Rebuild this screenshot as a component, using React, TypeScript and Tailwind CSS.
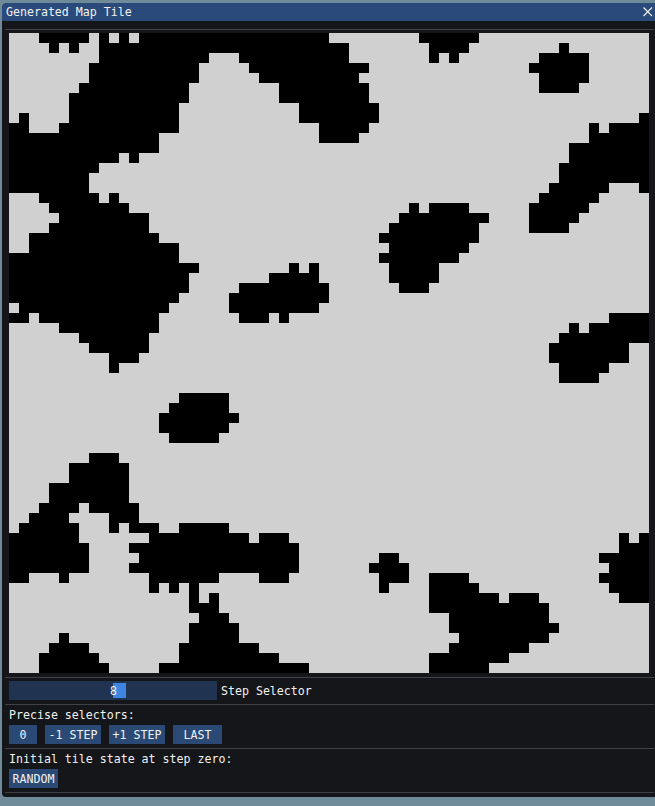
const font = { fontFamily: '"DejaVu Sans Mono", "Liberation Mono", monospace' };

// black cell runs per row: [start, end) in columns
const rows: number[][][] = [
  [[3, 8], [9, 10], [11, 12], [13, 32], [41, 47]],
  [[4, 5], [6, 7], [9, 34], [42, 46], [55, 56]],
  [[9, 20], [23, 34], [42, 43], [44, 45], [53, 58]],
  [[8, 19], [24, 36], [52, 58]],
  [[8, 19], [25, 35], [53, 58]],
  [[7, 18], [27, 36], [53, 57]],
  [[6, 18], [27, 36]],
  [[6, 17], [29, 37]],
  [[1, 2], [6, 17], [29, 37], [63, 64]],
  [[0, 2], [5, 17], [31, 36], [58, 59], [60, 64]],
  [[0, 15], [31, 35], [58, 64]],
  [[0, 15], [56, 64]],
  [[0, 11], [12, 13], [56, 64]],
  [[0, 9], [55, 64]],
  [[0, 8], [55, 64]],
  [[0, 8], [54, 60], [63, 64]],
  [[3, 9], [10, 11], [53, 59]],
  [[4, 12], [40, 41], [42, 46], [52, 58]],
  [[5, 14], [39, 48], [52, 57]],
  [[4, 14], [38, 47], [52, 56]],
  [[2, 15], [37, 47]],
  [[2, 17], [38, 46]],
  [[0, 17], [37, 45]],
  [[0, 19], [28, 29], [30, 31], [38, 43]],
  [[0, 18], [26, 31], [38, 43]],
  [[0, 18], [23, 32], [39, 42]],
  [[0, 17], [22, 32]],
  [[1, 16], [22, 31]],
  [[0, 2], [3, 15], [23, 26], [27, 28], [60, 64]],
  [[5, 15], [56, 57], [58, 64]],
  [[7, 14], [55, 64]],
  [[8, 14], [54, 62]],
  [[10, 13], [54, 62]],
  [[10, 11], [55, 60]],
  [[55, 59]],
  [],
  [[17, 22]],
  [[16, 22]],
  [[15, 23]],
  [[15, 22]],
  [[16, 21]],
  [],
  [[8, 11]],
  [[6, 12]],
  [[6, 12]],
  [[4, 12]],
  [[4, 12]],
  [[3, 7], [8, 13]],
  [[2, 6], [10, 13]],
  [[1, 7], [10, 11], [12, 15], [17, 22]],
  [[0, 7], [14, 24], [25, 28], [61, 62], [63, 64]],
  [[0, 8], [12, 29], [61, 64]],
  [[0, 8], [13, 29], [37, 39], [59, 64]],
  [[0, 8], [12, 29], [36, 40], [60, 64]],
  [[0, 2], [5, 6], [14, 21], [25, 28], [37, 40], [42, 46], [59, 64]],
  [[14, 15], [16, 17], [18, 19], [37, 38], [42, 47], [60, 64]],
  [[18, 19], [20, 21], [42, 49], [50, 53], [61, 64]],
  [[18, 21], [42, 54]],
  [[19, 22], [44, 54]],
  [[18, 23], [44, 55]],
  [[5, 6], [18, 23], [45, 54]],
  [[4, 8], [17, 25], [44, 52]],
  [[3, 9], [17, 27], [42, 50]],
  [[3, 10], [15, 30], [42, 48]],
];

function Sep({ className }: { className: string }) {
  return <div className={`h-px bg-[#404147] ${className}`} />;
}

function Btn({ label, width }: { label: string; width: string }) {
  return (
    <button className={`h-[19px] ${width} bg-[#2a4a75] text-[#f2f2f2] text-[11.6px] pt-[2px] leading-[17px] text-center`}>
      {label}
    </button>
  );
}

export default function App() {
  return (
    <div className="w-[655px] h-[806px] bg-[#6f8b99] pt-[3px] pl-[2px] overflow-hidden" style={font}>
      <div className="w-[653px] h-[794px] bg-[#141619] rounded-tl-[5px] rounded-bl-[4px] overflow-hidden text-[#f2f2f2] text-[11.6px]">
        <div className="h-[18px] bg-[#294a7a] flex items-center justify-between pl-[4px] pr-[3px]">
          <span className="leading-[18px]">Generated Map Tile</span>
          <svg width="10" height="10" viewBox="0 0 10 10" className="mr-[-1px]">
            <path d="M0.5 0.5 L9 9 M9 0.5 L0.5 9" stroke="#f2f2f2" strokeWidth="1.1" fill="none" />
          </svg>
        </div>
        <div className="pl-[3px] pr-[1px] pt-[8px] flex flex-col">
          <Sep className="" />
          <div className="ml-[4px] mt-[3px] w-[640px] h-[640px] bg-[#d0d0d0]">
            <svg width="640" height="640" viewBox="0 0 640 640" shapeRendering="crispEdges" className="block">
              {rows.map((runs, r) =>
                runs.map(([a, b]) => (
                  <rect key={`${r}-${a}`} x={a * 10} y={r * 10} width={(b - a) * 10} height={10} fill="#000" />
                )),
              )}
            </svg>
          </div>
          <Sep className="mt-[4px]" />
          <div className="ml-[4px] mt-[3px] flex items-center h-[19px]">
            <div className="relative w-[208px] h-[19px] bg-[#203350]">
              <div className="absolute left-[104px] top-[2px] w-[13px] h-[15px] bg-[#3d85e0]" />
              <span className="absolute left-[101px] top-[1px] leading-[19px]">8</span>
            </div>
            <span className="ml-[4px] pt-[2px]">Step Selector</span>
          </div>
          <Sep className="mt-[4px]" />
          <div className="ml-[4px] mt-[3px] h-[13px] leading-[15px]">Precise selectors:</div>
          <div className="ml-[4px] mt-[4px] flex gap-[8px]">
            <Btn label="0" width="w-[28px]" />
            <Btn label="-1 STEP" width="w-[56px]" />
            <Btn label="+1 STEP" width="w-[56px]" />
            <Btn label="LAST" width="w-[49px]" />
          </div>
          <Sep className="mt-[4px]" />
          <div className="ml-[4px] mt-[3px] h-[13px] leading-[15px]">Initial tile state at step zero:</div>
          <div className="ml-[4px] mt-[4px] flex">
            <Btn label="RANDOM" width="w-[49px]" />
          </div>
          <Sep className="mt-[4px]" />
        </div>
      </div>
    </div>
  );
}
